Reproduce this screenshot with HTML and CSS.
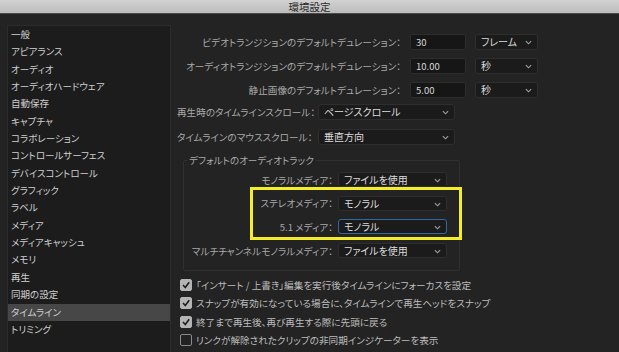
FILE: index.html
```html
<!DOCTYPE html>
<html lang="ja">
  <head>
    <meta charset="UTF-8" />
    <title>環境設定</title>
    <link rel="stylesheet" href="styles.css">
  </head>
  <body>
    <!-- Window title -->
    <div class="titlebar">環境設定</div>

    <div class="window">
      <!-- Category list -->
      <ul class="sidebar">
        <li>一般</li>
        <li>アピアランス</li>
        <li>オーディオ</li>
        <li>オーディオハードウェア</li>
        <li>自動保存</li>
        <li>キャプチャ</li>
        <li>コラボレーション</li>
        <li>コントロールサーフェス</li>
        <li>デバイスコントロール</li>
        <li>グラフィック</li>
        <li>ラベル</li>
        <li>メディア</li>
        <li>メディアキャッシュ</li>
        <li>メモリ</li>
        <li>再生</li>
        <li>同期の設定</li>
        <li class="active">タイムライン</li>
        <li>トリミング</li>
      </ul>

      <!-- Timeline settings -->
      <div class="main">
        <div class="dur-row">
          <span class="label">ビデオトランジションのデフォルトデュレーション：</span>
          <span class="field">30</span>
          <span class="select unit">フレーム<svg class="chev" viewBox="0 0 8 5"><polyline points="1,1 4,4 7,1" /></svg></span>
        </div>
        <div class="dur-row">
          <span class="label">オーディオトランジションのデフォルトデュレーション：</span>
          <span class="field">10.00</span>
          <span class="select unit">秒<svg class="chev" viewBox="0 0 8 5"><polyline points="1,1 4,4 7,1" /></svg></span>
        </div>
        <div class="dur-row">
          <span class="label">静止画像のデフォルトデュレーション：</span>
          <span class="field">5.00</span>
          <span class="select unit">秒<svg class="chev" viewBox="0 0 8 5"><polyline points="1,1 4,4 7,1" /></svg></span>
        </div>

        <div class="scroll-row first">
          <span class="label-left">再生時のタイムラインスクロール：</span>
          <span class="select wide">ページスクロール<svg class="chev" viewBox="0 0 8 5"><polyline points="1,1 4,4 7,1" /></svg></span>
        </div>
        <div class="scroll-row">
          <span class="label-left">タイムラインのマウススクロール：</span>
          <span class="select wide">垂直方向<svg class="chev" viewBox="0 0 8 5"><polyline points="1,1 4,4 7,1" /></svg></span>
        </div>

        <!-- Default audio tracks -->
        <fieldset class="group">
          <legend>デフォルトのオーディオトラック</legend>
          <div class="track-row">
            <span class="label">モノラルメディア：</span>
            <span class="select track">ファイルを使用<svg class="chev" viewBox="0 0 8 5"><polyline points="1,1 4,4 7,1" /></svg></span>
          </div>
          <div class="highlight">
            <div class="track-row">
              <span class="label">ステレオメディア：</span>
              <span class="select track">モノラル<svg class="chev" viewBox="0 0 8 5"><polyline points="1,1 4,4 7,1" /></svg></span>
            </div>
            <div class="track-row">
              <span class="label">5.1 メディア：</span>
              <span class="select track focused">モノラル<svg class="chev" viewBox="0 0 8 5"><polyline points="1,1 4,4 7,1" /></svg></span>
            </div>
          </div>
          <div class="track-row">
            <span class="label">マルチチャンネルモノラルメディア：</span>
            <span class="select track">ファイルを使用<svg class="chev" viewBox="0 0 8 5"><polyline points="1,1 4,4 7,1" /></svg></span>
          </div>
        </fieldset>

        <ul class="checks">
          <li><span class="box checked"><svg viewBox="0 0 10 10"><polyline points="2,5 4.3,7.5 8.2,2.2" /></svg></span>「インサート / 上書き」編集を実行後タイムラインにフォーカスを設定</li>
          <li><span class="box checked"><svg viewBox="0 0 10 10"><polyline points="2,5 4.3,7.5 8.2,2.2" /></svg></span>スナップが有効になっている場合に、タイムラインで再生ヘッドをスナップ</li>
          <li><span class="box checked"><svg viewBox="0 0 10 10"><polyline points="2,5 4.3,7.5 8.2,2.2" /></svg></span>終了まで再生後、再び再生する際に先頭に戻る</li>
          <li><span class="box"></span>リンクが解除されたクリップの非同期インジケーターを表示</li>
        </ul>
      </div>
    </div>
  </body>
</html>
```

FILE: styles.css
```css
/* Reset & Base */
* {
  box-sizing: border-box;
  margin: 0;
  padding: 0;
}
html,
body {
  height: 100%;
  overflow: hidden;
}
body {
  background: #232323;
  color: #a9a9a9;
  font-family: "Noto Sans CJK JP", "Noto Sans", sans-serif;
  font-size: 9.6px;
  font-feature-settings: "palt";
  white-space: nowrap;
}
ul {
  list-style: none;
}
/* Title bar */
.titlebar {
  height: 14px;
  line-height: 14px;
  text-align: center;
  font-size: 10.5px;
  color: #2b2b2b;
  background: linear-gradient(#d2d2d2, #bcbcbc);
  border-bottom: 1px solid #4a4a4a;
}
.window {
  display: flex;
  align-items: flex-start;
}
/* Sidebar */
.sidebar {
  width: 164px;
  height: 340px;
  margin: 11px 0 0 7px;
  background: #1c1c1c;
  border: 1px solid #2c2c2c;
  flex-shrink: 0;
}
.sidebar li {
  height: 17.35px;
  line-height: 17.35px;
  padding-left: 3px;
  color: #cfcfcf;
  font-size: 9.5px;
}
.sidebar li.active {
  background: #474747;
}
/* Main */
.main {
  padding: 20px 0 0 6px;
  flex: 1;
}
.dur-row {
  display: flex;
  align-items: center;
  height: 16px;
  margin-bottom: 8px;
}
.dur-row .label {
  width: 227px;
  padding-right: 3px;
  text-align: right;
}
.field {
  width: 56px;
  height: 16px;
  margin-left: 6px;
  padding-left: 5px;
  line-height: 15px;
  background: #161616;
  border: 1px solid #2d2d2d;
  border-radius: 2px;
  color: #d6d6d6;
  font-size: 9.5px;
}
.select {
  position: relative;
  height: 16px;
  line-height: 14px;
  padding-left: 5px;
  background: #1b1b1b;
  border: 1px solid #2e2e2e;
  border-radius: 3px;
  color: #dcdcdc;
  font-size: 10px;
}
.chev {
  position: absolute;
  right: 5px;
  top: 5px;
  width: 7px;
  height: 5px;
  fill: none;
  stroke: #a0a0a0;
  stroke-width: 1.3;
}
.select.unit {
  width: 63px;
  margin-left: 9px;
}
.scroll-row {
  display: flex;
  align-items: center;
  height: 16px;
  margin-bottom: 9px;
}
.scroll-row.first {
  margin-top: -2px;
}
.label-left {
  width: 141px;
  flex-shrink: 0;
}
.select.wide {
  width: 137px;
}
/* Group box */
.group {
  width: 277px;
  margin: 8px 0 0 6px;
  padding: 6px 0 3px;
  border: 1px solid #303030;
  border-radius: 2px;
}
.group legend {
  margin-left: 3px;
  padding: 0 2px;
  line-height: 12px;
}
.track-row {
  display: flex;
  align-items: center;
  height: 15px;
  margin-bottom: 8.7px;
}
.track-row .label {
  width: 151px;
  padding-right: 2px;
  text-align: right;
}
.select.track {
  width: 109px;
  margin-left: 3px;
  height: 15px;
  line-height: 13px;
}
.select.focused {
  border-color: #2f6a9e;
}
/* Yellow annotation over the stereo / 5.1 rows */
.highlight {
  position: relative;
}
.highlight::after {
  content: "";
  position: absolute;
  top: -9px;
  bottom: -6px;
  left: 66px;
  right: -3px;
  border: 3px solid #f4ee2a;
  pointer-events: none;
}
/* Checkboxes */
.checks {
  margin: 5px 0 0 3px;
}
.checks li {
  display: flex;
  align-items: center;
  height: 18.4px;
  color: #bdbdbd;
}
.box {
  width: 12px;
  height: 12px;
  margin-right: 4px;
  border: 1px solid #8a8a8a;
  border-radius: 2px;
  flex-shrink: 0;
}
.box.checked {
  background: #b4b4b4;
  border-color: #b4b4b4;
}
.box svg {
  display: block;
  width: 10px;
  height: 10px;
  fill: none;
  stroke: #1e1e1e;
  stroke-width: 1.6;
}
```
